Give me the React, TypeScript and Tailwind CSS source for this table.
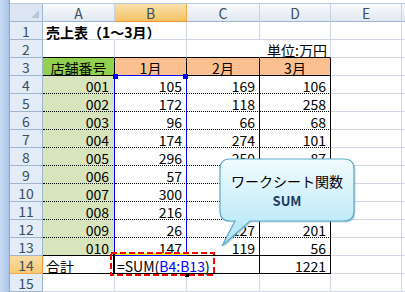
import React from "react";

type Spec = { t?: React.ReactNode; cls?: string };

const gridLine = "border-r-[#d0d7e5] border-b-[#d0d7e5]";
const blank: Spec = { cls: gridLine };
const bodyLine = "border-r-black border-b-black [border-bottom-style:dotted]";
const solidLine = "border-r-black border-b-black";

// C9:D11 lie under the callout, so they stay empty here
const data = [
  ["001", "105", "169", "106"],
  ["002", "172", "118", "258"],
  ["003", "96", "66", "68"],
  ["004", "174", "274", "101"],
  ["005", "296", "250", "87"],
  ["006", "57", "", ""],
  ["007", "300", "", ""],
  ["008", "216", "", ""],
  ["009", "26", "127", "201"],
  ["010", "147", "119", "56"],
];

const rows: Spec[][] = [
  [
    { t: "売上表（1～3月）", cls: "border-r-white border-b-[#d0d7e5] pl-[3px] font-bold" },
    blank,
    blank,
    blank,
    blank,
  ],
  [
    { cls: "border-r-[#d0d7e5] border-b-black" },
    { cls: "border-r-[#d0d7e5] border-b-black" },
    { cls: "border-r-white border-b-black" },
    { t: "単位:万円", cls: "border-r-[#d0d7e5] border-b-black justify-end pr-[3px]" },
    blank,
  ],
  [
    { t: "店舗番号", cls: `${solidLine} bg-[#92d050] justify-center` },
    { t: "1月", cls: `${solidLine} bg-[#fac090] justify-center` },
    { t: "2月", cls: `${solidLine} bg-[#fac090] justify-center` },
    { t: "3月", cls: `${solidLine} bg-[#fac090] justify-center` },
    blank,
  ],
  ...data.map((r, i) => {
    const line = i === data.length - 1 ? solidLine : bodyLine;
    return [
      { t: r[0], cls: `${line} bg-[#d8e4bc] justify-end pr-[5px]` },
      { t: r[1], cls: `${line} justify-end pr-[4px]` },
      { t: r[2], cls: `${line} justify-end pr-[4px]` },
      { t: r[3], cls: `${line} justify-end pr-[4px]` },
      blank,
    ];
  }),
  [
    { t: "合計", cls: `${solidLine} pl-[3px]` },
    {
      t: (
        <>
          =SUM(<span className="text-[#0000ff]">B4:B13</span>)
        </>
      ),
      cls: "border-r-transparent border-b-black pl-[2px]",
    },
    { cls: solidLine },
    { t: "1221", cls: `${solidLine} justify-end pr-[4px]` },
    blank,
  ],
  [blank, blank, blank, blank, blank],
];

const shape =
  "M230,159 H344 Q354,159 354,169 V211 Q354,221 344,221 H250 L222,246 L235,221 H230 Q220,221 220,211 V169 Q220,159 230,159 Z";

export default function App() {
  return (
    <div className="relative flex h-[292px] w-[405px] overflow-hidden bg-white font-['Noto_Sans_CJK_JP','Noto_Sans',sans-serif] text-[14px] text-black">
      {/* window frame */}
      <div className="h-full w-[10px] border-r border-r-[#8ea9cf] bg-linear-to-r from-[#c8dbf2] to-[#a9c3e8]" />

      <div className="flex flex-1 flex-col">
        <div className="h-[4px] border-b border-b-[#b9c9dd] bg-white" />

        <div className="grid grid-cols-[33px_72px_72px_73px_71px_71px_1fr] auto-rows-[18px] leading-[14px]">
          {/* header row */}
          <div className="relative border-r border-b border-[#9eb6ce] bg-[#dce6f3]">
            <div className="absolute right-[3px] bottom-[3px] h-0 w-0 border-l-[8px] border-b-[8px] border-l-transparent border-b-[#b8c7da]" />
          </div>
          {["A", "B", "C", "D", "E"].map((c) => (
            <div
              key={c}
              className={
                c === "B"
                  ? "flex items-center justify-center border-r border-b border-r-[#f2a84a] border-b-[#f29436] bg-linear-to-b from-[#fae0ab] to-[#f3c463] text-[#3a4f63]"
                  : "flex items-center justify-center border-r border-b border-r-[#c5d2e3] border-b-[#9eb6ce] bg-linear-to-b from-[#f8fafd] to-[#e1e8f1] text-[#3a4f63]"
              }
            >
              {c}
            </div>
          ))}
          <div className="border-b border-b-[#9eb6ce] bg-linear-to-b from-[#f8fafd] to-[#e1e8f1]" />

          {rows.map((row, ri) => (
            <React.Fragment key={ri}>
              <div
                className={
                  ri === 13
                    ? "flex items-center justify-center border-r border-b border-r-[#f29436] border-b-[#f2a84a] bg-linear-to-b from-[#fbdca4] to-[#f6c873] text-[#3a4f63]"
                    : "flex items-center justify-center border-r border-b border-[#9eb6ce] bg-[#e4ecf7] text-[#3a4f63]"
                }
              >
                {ri + 1}
              </div>
              {row.map((c, ci) => (
                <div
                  key={ci}
                  className={`flex min-w-0 items-end whitespace-nowrap border-r border-b ${c.cls ?? ""}`}
                >
                  {c.t}
                </div>
              ))}
              <div className="border-b border-b-[#d0d7e5]" />
            </React.Fragment>
          ))}
        </div>
      </div>

      {/* range finder for B4:B13 */}
      <div className="absolute left-[114px] top-[75px] h-[181px] w-[73px] border border-[#0000ff]" />
      <div className="absolute left-[113px] top-[74px] h-[5px] w-[5px] bg-[#0000ff]" />
      <div className="absolute left-[183px] top-[74px] h-[5px] w-[5px] bg-[#0000ff]" />

      {/* active cell B14 */}
      <div className="absolute left-[113px] top-[253px] h-[2px] w-[76px] bg-[#ffff00]" />
      <div className="absolute left-[113px] top-[253px] h-[21px] w-[2px] bg-black" />
      <div className="absolute left-[185px] top-[273px] h-[4px] w-[4px] bg-black" />

      <svg className="pointer-events-none absolute left-0 top-0" width="405" height="292">
        <defs>
          <linearGradient id="callout" x1="0" y1="0" x2="0" y2="1">
            <stop offset="0" stopColor="#f1fbfe" />
            <stop offset="1" stopColor="#ade5f7" />
          </linearGradient>
        </defs>
        <rect x="111" y="253" width="103" height="22" fill="none" stroke="#ff0000" strokeWidth="2" strokeDasharray="6 3" />
        <path d={shape} transform="translate(1.5,1.5)" fill="#7fa7b8" opacity="0.45" />
        <path d={shape} fill="url(#callout)" stroke="#5aa9c9" strokeWidth="1.2" />
      </svg>

      <div className="absolute left-[220px] top-[174px] flex w-[134px] flex-col items-center gap-[6px]">
        <div className="leading-[14px]">ワークシート関数</div>
        <div className="text-[13px] font-semibold leading-[14px] text-[#1f3a60]">SUM</div>
      </div>
    </div>
  );
}
